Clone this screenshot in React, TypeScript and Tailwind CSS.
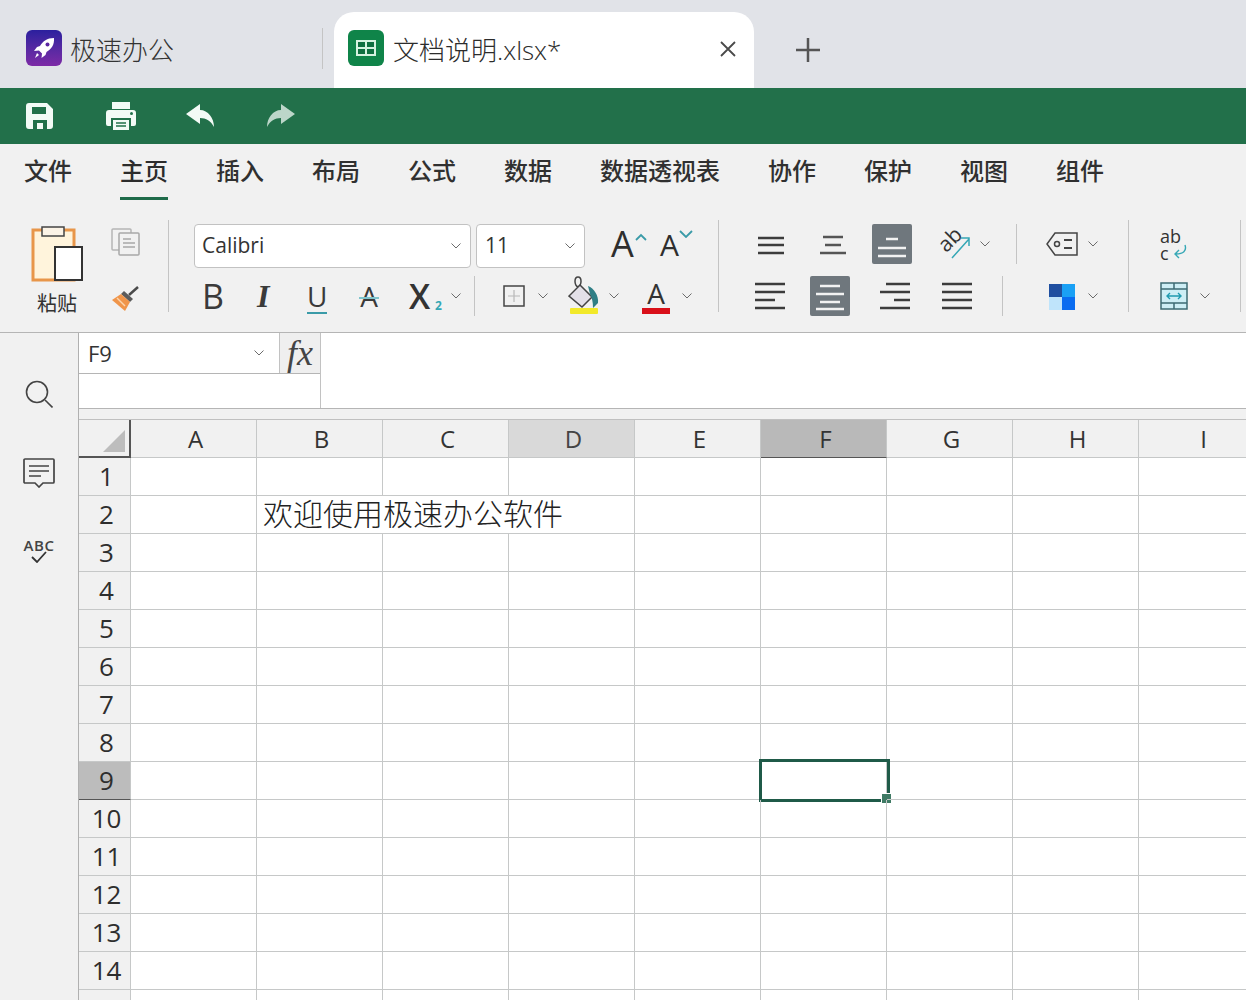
import type { ReactNode } from "react";

const columns = ["A", "B", "C", "D", "E", "F", "G", "H", "I"];
const rows = Array.from({ length: 15 }, (_, i) => i + 1);
const menus = ["文件", "主页", "插入", "布局", "公式", "数据", "数据透视表", "协作", "保护", "视图", "组件"];
const font = "[font-family:'Open_Sans','Noto_Sans_CJK_SC',sans-serif]";

function Chev({ className = "" }: { className?: string }) {
  return (
    <svg width="10" height="6" viewBox="0 0 10 6" className={`shrink-0 ${className}`}>
      <path d="M.5.5 5 5 9.500.5" fill="none" stroke="#6b6b6b" strokeWidth="1" />
    </svg>
  );
}

function Sep({ className = "" }: { className?: string }) {
  return <div className={`w-px shrink-0 bg-[#c4c4c4] ${className}`} />;
}

function Lines({ ys, xs, color = "#3c3c3c", w = 30, h = 30 }: { ys: number[]; xs: [number, number][]; color?: string; w?: number; h?: number }) {
  return (
    <svg width={w} height={h} viewBox={`0 0 ${w} ${h}`}>
      {ys.map((y, i) => (
        <line key={y} x1={xs[i][0]} x2={xs[i][1]} y1={y} y2={y} stroke={color} strokeWidth="2.500" />
      ))}
    </svg>
  );
}

function AlignBox({ children, className = "" }: { children: ReactNode; className?: string }) {
  return <div className={`flex h-10 w-10 shrink-0 items-center justify-center rounded-[2px] bg-[#6f777d] ${className}`}>{children}</div>;
}

function SheetLogo() {
  return (
    <div className="flex h-9 w-9 shrink-0 items-center justify-center rounded-[6px] bg-[#0f8449]">
      <svg width="20" height="16" viewBox="0 0 20 16">
        <rect x="1" y="1" width="18" height="14" fill="#0f6f40" stroke="#d6f2e0" strokeWidth="2" />
        <path d="M10 1v14M1 8h18" stroke="#d6f2e0" strokeWidth="2" />
      </svg>
    </div>
  );
}

function RocketLogo() {
  return (
    <div className="flex h-9 w-9 shrink-0 items-center justify-center rounded-[6px] bg-gradient-to-b from-[#2b1f9e] to-[#7d2aa6]">
      <svg width="24" height="24" viewBox="0 0 24 24" fill="#fff">
        <path d="M22 2c-7 0-11 3-14 8l-3 1-3 4 5-.5 3 3L9.500 22l4-3 1-3c5-3 8-7 7.500-14z" />
        <circle cx="15.500" cy="8.500" r="2" fill="#5a25a2" />
        <path d="M5 17l2 2-4 3z" />
      </svg>
    </div>
  );
}

function TabBar() {
  return (
    <div className="flex h-[88px] items-end bg-[#e1e3e8]">
      <div className="flex h-[76px] w-[322px] shrink-0 items-start pl-[26px] pt-[18px]">
        <RocketLogo />
        <span className="ml-2 mt-[2px] text-[26px] leading-9 font-light text-[#333]">极速办公</span>
      </div>
      <Sep className="mb-[19px] h-[41px] bg-[#b4b6ba]" />
      <div className="ml-[11px] flex h-[76px] w-[420px] shrink-0 items-start rounded-t-[20px] bg-white pl-[14px] pt-[18px]">
        <SheetLogo />
        <span className="ml-[9px] mt-[2px] text-[26px] leading-9 font-light text-[#2c2c2c]">文档说明.xlsx*</span>
        <svg width="18" height="18" viewBox="0 0 18 18" className="ml-auto mr-[17px] mt-[10px]">
          <path d="M2 2l14 14M16 2 2 16" stroke="#4a4a4a" strokeWidth="1.800" />
        </svg>
      </div>
      <svg width="26" height="26" viewBox="0 0 26 26" className="mb-[25px] ml-[41px]">
        <path d="M13 1v24M1 13h24" stroke="#555" strokeWidth="2.500" />
      </svg>
    </div>
  );
}

function QuickBar() {
  return (
    <div className="flex h-14 items-center bg-[#22704a] pl-[26px]">
      <svg width="28" height="28" viewBox="0 0 28 28">
        <path fillRule="evenodd" fill="#f3faf6" d="M3 1h18l6 6v17a3 3 0 0 1-3 3H3a3 3 0 0 1-3-3V4a3 3 0 0 1 3-3zM6 5v7h14V5zM7 18v9h14v-9zM11 21h6v6h-6z" />
      </svg>
      <svg width="30" height="30" viewBox="0 0 30 30" className="ml-[52px]">
        <path fill="#f3faf6" d="M6 1h18v7H6zM3 9h24a3 3 0 0 1 3 3v11a2 2 0 0 1-2 2h-3v-8H5v8H2a2 2 0 0 1-2-2V12a3 3 0 0 1 3-3z" />
        <rect x="7" y="19" width="16" height="10" fill="#f3faf6" />
        <path d="M10 22h10M10 25h10" stroke="#22704a" strokeWidth="1.500" />
        <circle cx="25.500" cy="12.500" r="1.500" fill="#22704a" />
      </svg>
      <svg width="29" height="24" viewBox="0 0 29 24" className="ml-[50px]">
        <path fill="#f3faf6" d="M0 10 14 0v6c8 0 14 8 14 17-3-6-8-9-14-9v6z" />
      </svg>
      <svg width="29" height="24" viewBox="0 0 29 24" className="ml-[51px]">
        <path fill="#bcd6c9" d="M29 10 15 0v6C7 6 1 14 1 23c3-6 8-9 14-9v6z" />
      </svg>
    </div>
  );
}

function MenuBar() {
  return (
    <div className="flex h-[66px] items-start gap-12 bg-[#f1f1f1] pl-6 pt-[9px]">
      {menus.map((m) => (
        <div key={m} className="flex flex-col">
          <span className={`text-2xl leading-9 font-medium ${m === "主页" ? "text-[#2c2c2c]" : "text-[#303030]"}`}>{m}</span>
          {m === "主页" && <div className="mt-[8px] h-[3px] bg-[#1f6b4a]" />}
        </div>
      ))}
    </div>
  );
}

function PasteGroup() {
  return (
    <div className="flex w-[168px] shrink-0 pl-[31px] pt-[16px]">
      <div className="flex w-[52px] flex-col items-center">
        <svg width="52" height="56" viewBox="0 0 52 56">
          <rect x="2" y="4" width="41" height="50" fill="#fff4dc" stroke="#e8964a" strokeWidth="3" />
          <rect x="11" y="1" width="22" height="9" fill="#fbf3e6" stroke="#444" strokeWidth="1.500" />
          <rect x="24" y="21" width="27" height="33" fill="#fff" stroke="#333" strokeWidth="2" />
        </svg>
        <span className="mt-[8px] text-[20px] leading-7 text-[#333]">粘贴</span>
      </div>
      <div className="ml-[27px] flex w-8 flex-col items-center">
        <svg width="30" height="28" viewBox="0 0 30 28" className="mt-[2px]">
          <rect x="1" y="1" width="19" height="21" rx="1" fill="none" stroke="#b5b5b5" strokeWidth="1.500" />
          <rect x="8" y="5" width="20" height="22" rx="1" fill="#f1f1f1" stroke="#a8a8a8" strokeWidth="1.500" />
          <path d="M12 11h8M12 15h12M12 19h12" stroke="#a8a8a8" strokeWidth="1.500" />
        </svg>
        <svg width="30" height="28" viewBox="0 0 30 28" className="mt-[29px]">
          <path d="M18 10 27 2" stroke="#4a4a4a" strokeWidth="2.500" />
          <path d="M13 6l9 8-3 3-9-8z" fill="#5b5b5b" />
          <path d="M10 9l9 8-5 9L1 15z" fill="#f0954a" />
          <path d="M6 13l8 8" stroke="#fbd5ad" strokeWidth="1.500" />
        </svg>
      </div>
    </div>
  );
}

function FontGroup() {
  return (
    <div className="flex w-[549px] shrink-0 flex-col gap-3 pt-[14px]">
      <div className="flex h-10 items-start">
        <div className="ml-[25px] flex h-[44px] w-[277px] shrink-0 items-center justify-between rounded-[4px] border border-[#c2c2c2] bg-white pl-[7px] pr-[9px]">
          <span className="text-[21px] text-[#333]">Calibri</span>
          <Chev />
        </div>
        <div className="ml-[5px] flex h-[44px] w-[109px] shrink-0 items-center justify-between rounded-[4px] border border-[#c2c2c2] bg-white pl-[8px] pr-[9px]">
          <span className="text-[21px] text-[#333]">11</span>
          <Chev />
        </div>
        <span className="ml-[26px] w-[24px] text-[36px] leading-10 text-[#2e2e2e]">A</span>
        <svg width="12" height="8" viewBox="0 0 12 8" className="mt-[9px]">
          <path d="M1 7l5-5 5 5" fill="none" stroke="#3a9ba8" strokeWidth="1.800" />
        </svg>
        <span className="ml-[13px] mt-[1px] w-[21px] text-[30px] leading-10 text-[#2e2e2e]">A</span>
        <svg width="14" height="8" viewBox="0 0 14 8" className="-ml-[2px] mt-[6px]">
          <path d="M1 1l6 6 6-6" fill="none" stroke="#3a9ba8" strokeWidth="1.800" />
        </svg>
      </div>
      <div className="flex h-10 items-center">
        <span className="ml-[33px] w-[22px] text-[34px] leading-10 text-[#3a3a3a]">B</span>
        <span className="ml-[33px] w-[16px] text-[32px] leading-10 font-bold italic text-[#3a3a3a] [font-family:'Liberation_Serif',serif]">I</span>
        <div className="relative ml-[34px] w-[20px]">
          <span className="block text-center text-[28px] leading-10 font-medium text-[#3a3a3a]">U</span>
          <div className="absolute bottom-[2px] left-0 h-[2px] w-full bg-[#3a9ba8]" />
        </div>
        <div className="relative ml-[32px] w-[20px]">
          <span className="block text-center text-[28px] leading-10 text-[#3a3a3a]">A</span>
          <div className="absolute left-0 top-[21px] h-[2px] w-full bg-[#7fc4cc]" />
        </div>
        <span className="ml-[30px] w-[26px] text-[34px] leading-10 font-semibold text-[#333]">X</span>
        <span className="mt-[20px] w-[9px] text-[12px] leading-4 font-bold text-[#35a7b5]">2</span>
        <Chev className="ml-[7px]" />
        <Sep className="ml-[13px] h-10" />
        <svg width="22" height="22" viewBox="0 0 22 22" className="ml-[28px]">
          <rect x="1" y="1" width="20" height="20" fill="none" stroke="#444" strokeWidth="1.500" />
          <path d="M11 5v12M5 11h12" stroke="#b8b8b8" strokeWidth="1.200" />
        </svg>
        <Chev className="ml-[13px]" />
        <svg width="32" height="40" viewBox="0 0 32 40" className="ml-[20px]">
          <path d="M10 1c-4 0-4 8 0 10M10 1c4 0 4 8 0 10" fill="none" stroke="#444" strokeWidth="1.500" />
          <path d="M12 9 24 21 14 31 1 20z" fill="#e3e0e8" stroke="#444" strokeWidth="1.500" />
          <path d="M20 10c6 2 11 10 10 17l-5 5c0-6-1-10-3-14z" fill="#2f7f86" />
          <rect x="2" y="32" width="28" height="6" rx="1" fill="#f2e92a" />
        </svg>
        <Chev className="ml-[9px]" />
        <div className="relative ml-[23px] flex h-10 w-7 flex-col items-center">
          <span className="text-[28px] leading-[34px] text-[#333]">A</span>
          <div className="absolute bottom-[2px] h-[6px] w-full bg-[#d9101a]" />
        </div>
        <Chev className="ml-[12px]" />
      </div>
    </div>
  );
}

function AlignGroup() {
  return (
    <div className="flex w-[409px] shrink-0 flex-col gap-3 pt-[14px]">
      <div className="flex h-10 items-center">
        <div className="ml-[39px] w-[26px]">
          <Lines w={26} ys={[9, 16, 24]} xs={[[0, 26], [0, 26], [0, 26]]} />
        </div>
        <div className="ml-[36px] w-[26px]">
          <Lines w={26} ys={[8, 16, 24]} xs={[[3, 23], [5, 21], [0, 26]]} color="#555" />
        </div>
        <AlignBox className="ml-[26px]">
          <Lines w={28} ys={[10, 19, 27]} xs={[[8, 20], [0, 28], [0, 28]]} color="#f2f2f2" />
        </AlignBox>
        <div className="relative ml-[26px] h-8 w-8">
          <span className="absolute -left-[1px] -top-[1px] origin-center -rotate-45 text-[21px] leading-6 text-[#333]">ab</span>
          <svg width="32" height="32" viewBox="0 0 32 32" className="absolute inset-0">
            <path d="M14 30 31 11M23 10h8v8" fill="none" stroke="#35a7b5" strokeWidth="1.500" />
          </svg>
        </div>
        <Chev className="ml-[10px]" />
        <Sep className="ml-[26px] h-10" />
        <svg width="32" height="24" viewBox="0 0 32 24" className="ml-[29px]">
          <path d="M9 1h22v22H9L1 12z" fill="none" stroke="#444" strokeWidth="1.500" />
          <circle cx="11" cy="12" r="2.500" fill="none" stroke="#444" strokeWidth="1.500" />
          <path d="M18 8h8M18 16h8" stroke="#444" strokeWidth="1.800" />
        </svg>
        <Chev className="ml-[10px]" />
      </div>
      <div className="flex h-10 items-center">
        <div className="ml-[36px] w-[30px]">
          <Lines ys={[3, 11, 19, 27]} xs={[[0, 30], [0, 30], [0, 20], [0, 30]]} />
        </div>
        <AlignBox className="ml-[25px]">
          <Lines ys={[5, 13, 21, 28]} xs={[[5, 25], [1, 29], [5, 25], [1, 29]]} color="#f2f2f2" />
        </AlignBox>
        <div className="ml-[30px] w-[30px]">
          <Lines ys={[3, 11, 19, 27]} xs={[[6, 30], [0, 30], [14, 30], [0, 30]]} />
        </div>
        <div className="ml-[32px] w-[30px]">
          <Lines ys={[3, 11, 19, 27]} xs={[[0, 30], [0, 30], [0, 30], [0, 30]]} />
        </div>
        <Sep className="ml-[30px] h-10" />
        <svg width="28" height="27" viewBox="0 0 28 27" className="ml-[45px]">
          <rect x="1" y="1" width="13" height="13" fill="#1f4fa0" />
          <rect x="14" y="1" width="13" height="13" fill="#1aa0f5" />
          <rect x="1" y="14" width="13" height="13" fill="#bfe4fb" />
          <rect x="14" y="14" width="13" height="13" fill="#0a6cf0" />
        </svg>
        <Chev className="ml-[12px]" />
      </div>
    </div>
  );
}

function WrapGroup() {
  return (
    <div className="flex w-[111px] shrink-0 flex-col gap-3 pl-[31px] pt-[14px]">
      <div className="relative h-10 w-[30px]">
        <p className="pt-[4px] text-[18px] leading-[17px] text-[#333]">
          ab
          <br />c
        </p>
        <svg width="16" height="16" viewBox="0 0 16 16" className="absolute left-[12px] top-[20px]">
          <path d="M13 1c2 6-2 9-9 9M7 6l-4 4 4 4" fill="none" stroke="#35a7b5" strokeWidth="1.400" />
        </svg>
      </div>
      <div className="flex h-10 items-center">
        <svg width="28" height="28" viewBox="0 0 28 28">
          <rect x="1" y="1" width="26" height="26" fill="#cdeef5" stroke="#3c6b73" strokeWidth="1.500" />
          <path d="M1 7h26M1 21h26M14 1v6M14 21v6" stroke="#3c6b73" strokeWidth="1.500" />
          <path d="M7 14h14M10 11l-3 3 3 3M18 11l3 3-3 3" fill="none" stroke="#1f9bb0" strokeWidth="1.400" />
        </svg>
        <Chev className="ml-[12px]" />
      </div>
    </div>
  );
}

function Ribbon() {
  return (
    <div className="flex h-[123px] border-b border-[#b5b5b5] bg-[#f1f1f1]">
      <PasteGroup />
      <Sep className="mt-[10px] h-[92px]" />
      <FontGroup />
      <Sep className="mt-[10px] h-[92px]" />
      <AlignGroup />
      <Sep className="mt-[10px] h-[92px]" />
      <WrapGroup />
      <Sep className="mt-[10px] h-[92px]" />
    </div>
  );
}

function SideRail() {
  return (
    <div className="flex w-[79px] shrink-0 flex-col items-center border-r border-[#b0b0b0] bg-[#f1f1f1] pt-[47px]">
      <svg width="28" height="28" viewBox="0 0 28 28">
        <circle cx="12" cy="12" r="10.500" fill="none" stroke="#444" strokeWidth="1.600" />
        <path d="M20 20l7.500 7.500" stroke="#444" strokeWidth="1.600" />
      </svg>
      <svg width="32" height="30" viewBox="0 0 32 30" className="mt-[50px]">
        <path d="M2 1h28a1 1 0 0 1 1 1v22a1 1 0 0 1-1 1H20l-4 4-4-4H2a1 1 0 0 1-1-1V2a1 1 0 0 1 1-1z" fill="none" stroke="#444" strokeWidth="1.700" />
        <path d="M6 8h20M6 13h20M6 18h12" stroke="#444" strokeWidth="1.700" />
      </svg>
      <div className="mt-[50px] flex w-[32px] flex-col items-center">
        <span className="text-[15px] leading-[14px] font-semibold tracking-[0.5px] text-[#444]">ABC</span>
        <svg width="16" height="12" viewBox="0 0 16 12" className="-mt-[1px]">
          <path d="M1 6l5 5 9-10" fill="none" stroke="#333" strokeWidth="1.800" />
        </svg>
      </div>
    </div>
  );
}

function FormulaBar() {
  return (
    <div className="flex h-[76px] shrink-0 border-b border-[#b5b5b5] bg-white">
      <div className="flex w-[242px] shrink-0 flex-col border-r border-[#c2c2c2]">
        <div className="flex h-[41px] border-b border-[#b5b5b5]">
          <div className="flex w-[200px] items-center justify-between pl-[9px] pr-[15px]">
            <span className="text-[22px] text-[#333]">F9</span>
            <Chev />
          </div>
          <div className="flex flex-1 items-center justify-center border-l border-[#c2c2c2] bg-[#efefef]">
            <span className="text-[36px] leading-none italic text-[#444] [font-family:'Liberation_Serif',serif]">fx</span>
          </div>
        </div>
      </div>
      <div className="flex-1" />
    </div>
  );
}

function Sheet() {
  const line = "border-b border-r border-[#c6c8c8]";
  return (
    <div className="grid grid-cols-[52px_repeat(9,126px)] auto-rows-[38px] border-t border-[#c0c0c0]">
      <div className="flex items-end justify-end border-b-2 border-r-2 border-[#555] bg-[#f1f1f1] pb-[4px] pr-[4px]">
        <svg width="22" height="22" viewBox="0 0 22 22">
          <path d="M22 0v22H0z" fill="#bdbdbd" />
        </svg>
      </div>
      {columns.map((c) => (
        <div
          key={c}
          className={`flex items-center justify-center pl-1 text-2xl ${line} ${
            c === "F" ? "border-b-[#555] bg-[#b9b9b9] text-[#333]" : c === "D" ? "bg-[#d9d9d9] text-[#444]" : "bg-[#f1f1f1] text-[#333]"
          }`}
        >
          {c}
        </div>
      ))}
      {rows.map((r) => {
        return [
          <div
            key={`h${r}`}
            className={`flex items-center justify-center pl-1 text-[26px] text-[#2e2e2e] ${line} ${
              r === 9 ? "border-b-[#555] bg-[#bcbcbc]" : "bg-[#f1f1f1]"
            }`}
          >
            {r < 15 ? r : ""}
          </div>,
          ...columns.flatMap((c) => {
            if (r === 2 && (c === "C" || c === "D")) return [];
            if (r === 2 && c === "B") {
              return [
                <div key="welcome" className={`col-span-3 pl-[6px] text-[30px] leading-[36px] text-[#222] font-light ${line}`}>
                  欢迎使用极速办公软件
                </div>,
              ];
            }
            return [
              <div key={c + r} className={`relative ${line}`}>
                {r === 9 && c === "F" && (
                  <>
                    <div className="absolute -left-[2px] -top-[3px] h-[43px] w-[131px] border-[3px] border-[#1f5a48]" />
                    <div className="absolute -right-[6px] -bottom-[5px] h-[11px] w-[11px] border border-white bg-[#3f7a64]" />
                  </>
                )}
              </div>,
            ];
          }),
        ];
      })}
    </div>
  );
}

export default function App() {
  return (
    <div className={`h-[1000px] w-[1246px] overflow-hidden bg-white ${font}`}>
      <TabBar />
      <QuickBar />
      <MenuBar />
      <Ribbon />
      <div className="flex h-[667px]">
        <SideRail />
        <div className="flex min-w-0 flex-1 flex-col overflow-hidden">
          <FormulaBar />
          <div className="h-[10px] shrink-0 bg-[#f1f1f1]" />
          <Sheet />
        </div>
      </div>
    </div>
  );
}
